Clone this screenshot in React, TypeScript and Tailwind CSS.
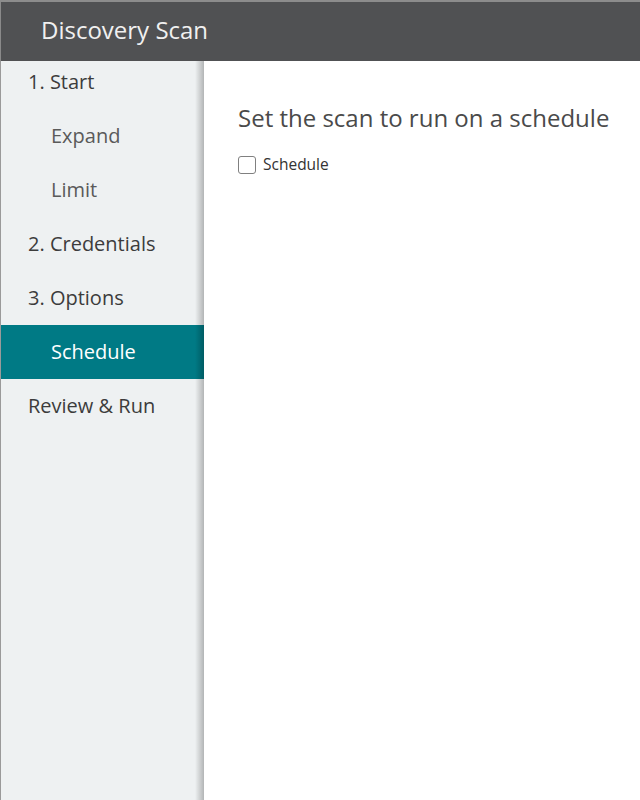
export default function App() {
  const items = [
    { label: "1. Start", sub: false },
    { label: "Expand", sub: true },
    { label: "Limit", sub: true },
    { label: "2. Credentials", sub: false },
    { label: "3. Options", sub: false },
    { label: "Schedule", sub: true, active: true },
    { label: "Review & Run", sub: false },
  ]

  return (
    <div className="h-[800px] w-[640px] flex flex-col overflow-hidden bg-white font-['Open_Sans',sans-serif]">
      <div className="h-[2px] bg-[#8c8c8c]" />
      <header className="h-[59px] shrink-0 flex items-center pl-[40px] pb-[3px] bg-[#505153] border-l border-[#8a8a8a]">
        <h1 className="text-[24px] text-[#f0f0f0]">Discovery Scan</h1>
      </header>
      <div className="flex flex-1">
        <nav className="w-[204px] shrink-0 relative overflow-hidden bg-[#eef1f2] border-l border-[#9a9a9a]">
          <div className="-mt-[6px]">
            {items.map((item) => (
              <div
                key={item.label}
                className={
                  "h-[54px] flex items-center text-[20px] " +
                  (item.sub ? "pl-[50px] " : "pl-[27px] ") +
                  (item.active
                    ? "bg-[#007a85] text-white"
                    : item.sub
                      ? "text-[#5a5a5a]"
                      : "text-[#3c3c3c]")
                }
              >
                {item.label}
              </div>
            ))}
          </div>
          <div className="absolute top-0 right-0 h-full w-[9px] bg-gradient-to-r from-transparent to-black/25" />
        </nav>
        <main className="flex-1 pl-[34px] pt-[39px]">
          <h2 className="text-[24px] text-[#4a4a4a]">Set the scan to run on a schedule</h2>
          <label className="mt-[17px] flex items-center gap-[7px] text-[15.5px] text-[#333]">
            <span className="w-[18px] h-[18px] rounded-[3px] border border-[#808080] bg-white" />
            Schedule
          </label>
        </main>
      </div>
    </div>
  )
}
